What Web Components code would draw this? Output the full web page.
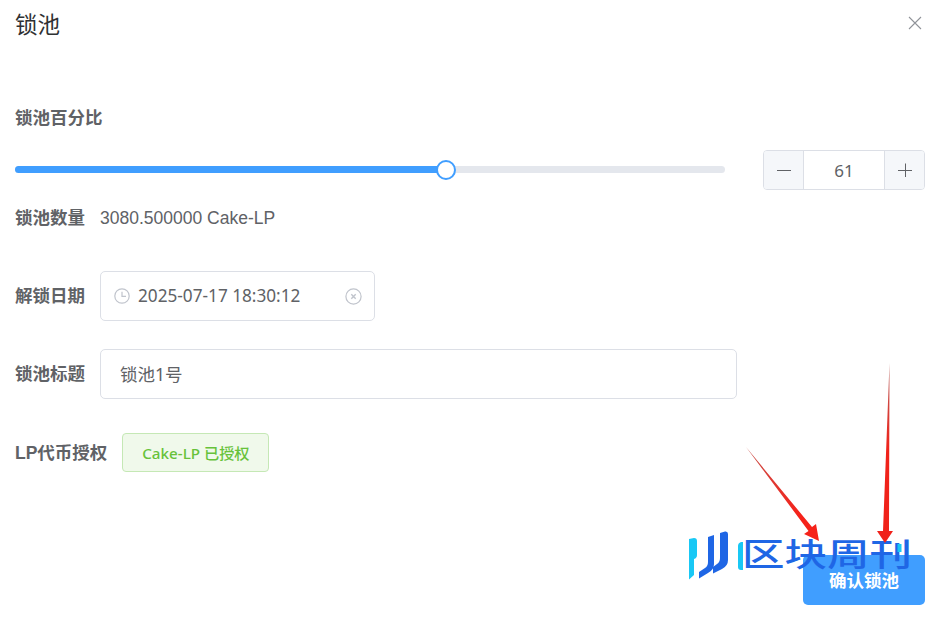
<!DOCTYPE html>
<html>
<head>
<meta charset="utf-8">
<style>
  html, body { margin: 0; padding: 0; background: #fff; }
</style>
</head>
<body>
<lock-dialog></lock-dialog>
<script>
const FONT = '"Noto Sans", "Noto Sans CJK SC", sans-serif';

class LockRow extends HTMLElement {
    constructor() {
        super();
        this.attachShadow({ mode: 'open' });
        this.shadowRoot.innerHTML = `
            <style>
                :host { display: flex; align-items: center; gap: var(--gap, 15px); }
                .label {
                    font: 700 17.5px/24px "Liberation Sans", "Noto Sans CJK SC", sans-serif;
                    color: #606266;
                    white-space: nowrap;
                }
            </style>
            <span class="label"><slot name="label"></slot></span>
            <slot></slot>
        `;
    }
}

class LockSlider extends HTMLElement {
    constructor() {
        super();
        this.attachShadow({ mode: 'open' });
        this.shadowRoot.innerHTML = `
            <style>
                :host { display: block; position: relative; width: 710px; height: 7px; border-radius: 4px; background: #e4e7ed; margin-top: -1px; }
                .fill { width: 431px; height: 100%; background: #409eff; border-radius: 4px 0 0 4px; }
                .thumb {
                    position: absolute; left: 421px; top: -6.5px;
                    width: 20px; height: 20px; box-sizing: border-box;
                    border: 2px solid #409eff; border-radius: 50%; background: #fff;
                }
            </style>
            <div class="fill"></div>
            <div class="thumb"></div>
        `;
    }
}

class LockNumber extends HTMLElement {
    constructor() {
        super();
        this.attachShadow({ mode: 'open' });
        this.shadowRoot.innerHTML = `
            <style>
                :host {
                    display: grid; grid-template-columns: 40px 1fr 40px;
                    width: 162px; height: 40px; box-sizing: border-box;
                    border: 1px solid #dcdfe6; border-radius: 4px; overflow: hidden;
                }
                .btn { background: #f5f7fa; display: flex; align-items: center; justify-content: center; }
                .minus { border-right: 1px solid #dcdfe6; }
                .plus { border-left: 1px solid #dcdfe6; }
                .val { font: 17px/40px ${FONT}; color: #606266; text-align: center; }
                svg { width: 14px; height: 14px; stroke: #606266; stroke-width: 1; fill: none; margin-top: -2px; }
            </style>
            <div class="btn minus"><svg viewBox="0 0 14 14"><path d="M0 7.5H14"/></svg></div>
            <div class="val"><slot></slot></div>
            <div class="btn plus"><svg viewBox="0 0 14 14"><path d="M0 7.5H14M7.5 0.5V14"/></svg></div>
        `;
    }
}

class LockField extends HTMLElement {
    constructor() {
        super();
        this.attachShadow({ mode: 'open' });
        this.shadowRoot.innerHTML = `
            <style>
                :host {
                    display: flex; align-items: center; box-sizing: border-box;
                    height: 50px; border: 1px solid #dcdfe6; border-radius: 5px; background: #fff;
                    font: var(--size, 17.5px)/24px ${FONT}; color: #606266;
                    padding: 0 var(--pad-right, 19px) 0 var(--pad-left, 19px);
                }
                .text { flex: 1; white-space: nowrap; }
                ::slotted(svg) { flex: none; }
            </style>
            <slot name="before"></slot>
            <span class="text"><slot></slot></span>
            <slot name="after"></slot>
        `;
    }
}

class LockTag extends HTMLElement {
    constructor() {
        super();
        this.attachShadow({ mode: 'open' });
        this.shadowRoot.innerHTML = `
            <style>
                :host {
                    display: inline-flex; align-items: center; justify-content: center;
                    width: 147px; height: 39px; box-sizing: border-box;
                    background: #f0f9eb; border: 1px solid #c5e8b5; border-radius: 4px;
                    font: 500 15.2px/20px ${FONT}; color: #67c23a; white-space: nowrap;
                }
            </style>
            <slot></slot>
        `;
    }
}

class LockButton extends HTMLElement {
    constructor() {
        super();
        this.attachShadow({ mode: 'open' });
        this.shadowRoot.innerHTML = `
            <style>
                :host {
                    display: flex; align-items: center; justify-content: center;
                    width: 122px; height: 50px; border-radius: 5px; background: #409eff;
                    font: 700 17.5px/24px "Noto Sans CJK SC", sans-serif; color: #fff;
                }
            </style>
            <slot></slot>
        `;
    }
}

// watermark and the two red arrows lie over the dialog
class LockOverlay extends HTMLElement {
    constructor() {
        super();
        this.attachShadow({ mode: 'open' });
        this.shadowRoot.innerHTML = `
            <style>
                :host { display: block; position: absolute; left: 0; top: 0; width: 937px; height: 619px; pointer-events: none; }
                svg { display: block; }
                text { font-family: "Noto Sans CJK SC", sans-serif; font-weight: 500; fill: #1f66e5; }
            </style>
            <svg width="937" height="619" viewBox="0 0 937 619">
                <defs>
                    <linearGradient id="a1" x1="746" y1="447" x2="800" y2="515" gradientUnits="userSpaceOnUse">
                        <stop offset="0" stop-color="#c8504a"/><stop offset="1" stop-color="#f5221a"/>
                    </linearGradient>
                    <linearGradient id="a2" x1="889" y1="363" x2="888" y2="450" gradientUnits="userSpaceOnUse">
                        <stop offset="0" stop-color="#b8625e"/><stop offset="1" stop-color="#f0221a"/>
                    </linearGradient>
                </defs>
                <path fill="#19c8f5" d="M689 539L694 538Q697 538 697 541V555Q697 558 694 559V575L689 579.500Z"/>
                <path fill="#1f66e5" d="M708 537L714 535V564Q714 570 708 573L699 578.500V572L705 568Q708 566 708 562Z"/>
                <path fill="#1f66e5" d="M720 533L725 531.500Q728 531 728 534V560Q728 566 722 569L713 573.500V567L717 564Q720 562 720 558Z"/>
                <path fill="#19c8f5" d="M743 542H741Q738 543 738 546V567Q738 570 741 570H743Z"/>
                <text x="742" y="566" font-size="32" textLength="170" lengthAdjust="spacingAndGlyphs">区块周刊</text>
                <rect x="897.500" y="544" width="4" height="8" fill="#19c8f5"/>
                <path fill="url(#a1)" d="M746 447L812 527L816 524L819 541L804 534L808.500 531Z"/>
                <path fill="url(#a2)" d="M889.500 363L889 531L893 531L885 543L877 531L883 531Z"/>
            </svg>
        `;
    }
}

class LockDialog extends HTMLElement {
    constructor() {
        super();
        this.attachShadow({ mode: 'open' });
        this.shadowRoot.innerHTML = `
            <style>
                :host {
                    display: block; position: relative; box-sizing: border-box;
                    width: 937px; height: 619px; padding: 0 12px 0 15px; overflow: hidden;
                    background: #fff;
                }
                header { display: flex; justify-content: space-between; align-items: center; height: 50px; }
                h1 { margin: 0 0 4px; font: 400 22.5px/30px "Noto Sans CJK SC", sans-serif; color: #303133; }
                .close { margin-right: 3px; margin-top: -4px; }
                .title-label {
                    margin-top: 56px;
                    font: 700 17.5px/24px "Liberation Sans", "Noto Sans CJK SC", sans-serif; color: #606266;
                }
                .slider-row { display: flex; align-items: center; justify-content: space-between; margin-top: 20px; }
                .amount { margin-top: 16px; }
                .value { font: 17.5px/24px "Liberation Sans", sans-serif; color: #606266; }
                .date { margin-top: 41px; }
                .date lock-field { width: 275px; --pad-left: 13px; --pad-right: 12px; --size: 17.2px; }
                .date svg[slot="before"] { margin-right: 8px; }
                .name { margin-top: 28px; }
                .name lock-field { width: 637px; }
                .lp { margin-top: 34px; }
                .foot { display: flex; justify-content: flex-end; margin-top: 83px; }
            </style>
            <header>
                <h1>锁池</h1>
                <svg class="close" width="14" height="14" viewBox="0 0 14 14" fill="none" stroke="#909399" stroke-width="1.100">
                    <path d="M1 1L13 13M13 1L1 13"/>
                </svg>
            </header>
            <div class="title-label">锁池百分比</div>
            <div class="slider-row">
                <lock-slider></lock-slider>
                <lock-number>61</lock-number>
            </div>
            <lock-row class="amount">
                <span slot="label">锁池数量</span>
                <span class="value">3080.500000 Cake-LP</span>
            </lock-row>
            <lock-row class="date">
                <span slot="label">解锁日期</span>
                <lock-field>
                    <svg slot="before" width="16" height="16" viewBox="0 0 16 16" fill="none" stroke="#c0c4cc" stroke-width="1.200">
                        <circle cx="8" cy="8" r="7.200"/><path d="M8 3.800V8.300H12"/>
                    </svg>
                    2025-07-17 18:30:12
                    <svg slot="after" width="17" height="17" viewBox="0 0 17 17" fill="none" stroke="#c0c4cc" stroke-width="1.200">
                        <circle cx="8.500" cy="8.500" r="7.600"/><path d="M6.300 6.300L10.700 10.700M10.700 6.300L6.300 10.700" stroke-width="1.400"/>
                    </svg>
                </lock-field>
            </lock-row>
            <lock-row class="name">
                <span slot="label">锁池标题</span>
                <lock-field>锁池1号</lock-field>
            </lock-row>
            <lock-row class="lp">
                <span slot="label">LP代币授权</span>
                <lock-tag>Cake-LP 已授权</lock-tag>
            </lock-row>
            <div class="foot"><lock-button>确认锁池</lock-button></div>
            <lock-overlay></lock-overlay>
        `;
    }
}

customElements.define('lock-row', LockRow);
customElements.define('lock-slider', LockSlider);
customElements.define('lock-number', LockNumber);
customElements.define('lock-field', LockField);
customElements.define('lock-tag', LockTag);
customElements.define('lock-button', LockButton);
customElements.define('lock-overlay', LockOverlay);
customElements.define('lock-dialog', LockDialog);
</script>
</body>
</html>
